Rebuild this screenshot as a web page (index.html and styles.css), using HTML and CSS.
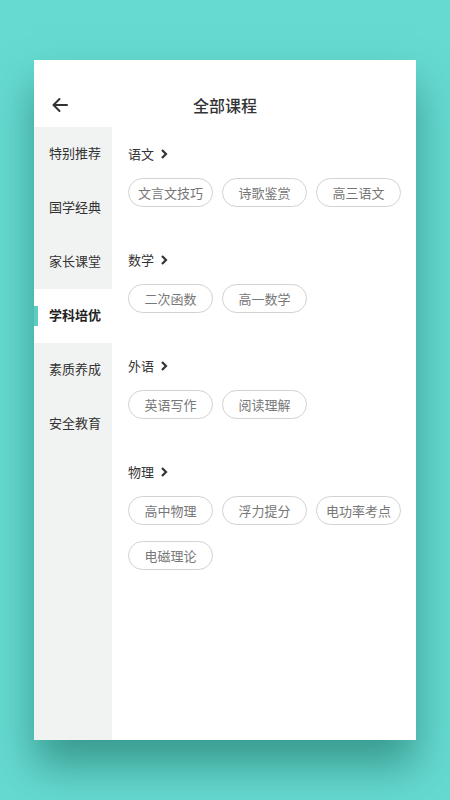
FILE: index.html
```html
<!DOCTYPE html>
<html lang="zh-CN">
<head>
    <meta charset="UTF-8">
    <meta name="viewport" content="width=device-width, initial-scale=1.0">
    <title>全部课程</title>
    <link rel="stylesheet" href="styles.css">
</head>
<body>
    <div class="screen">
        <div class="header">
            <span class="back">
                <svg width="18" height="18" viewBox="0 0 18 18" fill="none" stroke="#333" stroke-width="2" stroke-linecap="round" stroke-linejoin="round">
                    <path d="M16 9H2.5M8.5 3L2.5 9l6 6"/>
                </svg>
            </span>
            <h1 class="title">全部课程</h1>
        </div>

        <div class="main">
            <ul class="menu">
                <li class="menu-item">特别推荐</li>
                <li class="menu-item">国学经典</li>
                <li class="menu-item">家长课堂</li>
                <li class="menu-item active">学科培优</li>
                <li class="menu-item">素质养成</li>
                <li class="menu-item">安全教育</li>
            </ul>

            <div class="content">
                <div class="section">
                    <div class="section-title">语文 <svg class="chev" width="8" height="10" viewBox="0 0 8 10"><path d="M2 1l4 4-4 4" fill="none" stroke="#333" stroke-width="2.2"/></svg></div>
                    <div class="tags">
                        <span class="tag">文言文技巧</span>
                        <span class="tag">诗歌鉴赏</span>
                        <span class="tag">高三语文</span>
                    </div>
                </div>
                <div class="section">
                    <div class="section-title">数学 <svg class="chev" width="8" height="10" viewBox="0 0 8 10"><path d="M2 1l4 4-4 4" fill="none" stroke="#333" stroke-width="2.2"/></svg></div>
                    <div class="tags">
                        <span class="tag">二次函数</span>
                        <span class="tag">高一数学</span>
                    </div>
                </div>
                <div class="section">
                    <div class="section-title">外语 <svg class="chev" width="8" height="10" viewBox="0 0 8 10"><path d="M2 1l4 4-4 4" fill="none" stroke="#333" stroke-width="2.2"/></svg></div>
                    <div class="tags">
                        <span class="tag">英语写作</span>
                        <span class="tag">阅读理解</span>
                    </div>
                </div>
                <div class="section">
                    <div class="section-title">物理 <svg class="chev" width="8" height="10" viewBox="0 0 8 10"><path d="M2 1l4 4-4 4" fill="none" stroke="#333" stroke-width="2.2"/></svg></div>
                    <div class="tags">
                        <span class="tag">高中物理</span>
                        <span class="tag">浮力提分</span>
                        <span class="tag">电功率考点</span>
                        <span class="tag">电磁理论</span>
                    </div>
                </div>
            </div>
        </div>
    </div>
</body>
</html>
```

FILE: styles.css
```css
body {
    margin: 0;
    background: #66dad0;
    font-family: "Noto Sans CJK SC", "Noto Sans", sans-serif;
    height: 800px;
    overflow: hidden;
}
.screen {
    width: 382px;
    height: 680px;
    margin: 60px 0 0 34px;
    background: white;
    display: flex;
    flex-direction: column;
    box-shadow: 0 26px 40px rgba(20, 100, 90, 0.55);
}
.header {
    height: 67px;
    box-sizing: border-box;
    padding-top: 28px;
    display: flex;
    align-items: flex-start;
    justify-content: center;
    position: relative;
}
.back {
    position: absolute;
    left: 17px;
    top: 36px;
    display: flex;
}
.title {
    margin: 0;
    font-size: 16px;
    font-weight: 500;
    line-height: 34px;
    color: #333;
}
.main {
    flex: 1;
    display: flex;
}
.menu {
    width: 78px;
    margin: 0;
    padding: 0;
    list-style: none;
    background: #f1f2f2;
}
.menu-item {
    height: 54px;
    line-height: 52px;
    padding-left: 15px;
    font-size: 13px;
    color: #333;
    position: relative;
}
.menu-item.active {
    background: white;
    font-weight: bold;
    color: #222;
}
/* teal marker on the selected category */
.menu-item.active::before {
    content: "";
    position: absolute;
    left: 0;
    top: 17px;
    width: 4px;
    height: 20px;
    background: #5ccbc1;
}
.content {
    flex: 1;
    padding: 17px 0 0 16px;
}
.section {
    margin-bottom: 43px;
}
.section-title {
    height: 20px;
    line-height: 20px;
    font-size: 13px;
    color: #333;
    display: flex;
    align-items: center;
    gap: 6px;
    margin-bottom: 14px;
}
.tags {
    display: flex;
    flex-wrap: wrap;
    gap: 16px 9px;
    width: 280px;
}
.tag {
    width: 85px;
    height: 29px;
    box-sizing: border-box;
    border: 1px solid #d2d2d2;
    border-radius: 15px;
    font-size: 13px;
    color: #777;
    display: flex;
    align-items: center;
    justify-content: center;
}
```
